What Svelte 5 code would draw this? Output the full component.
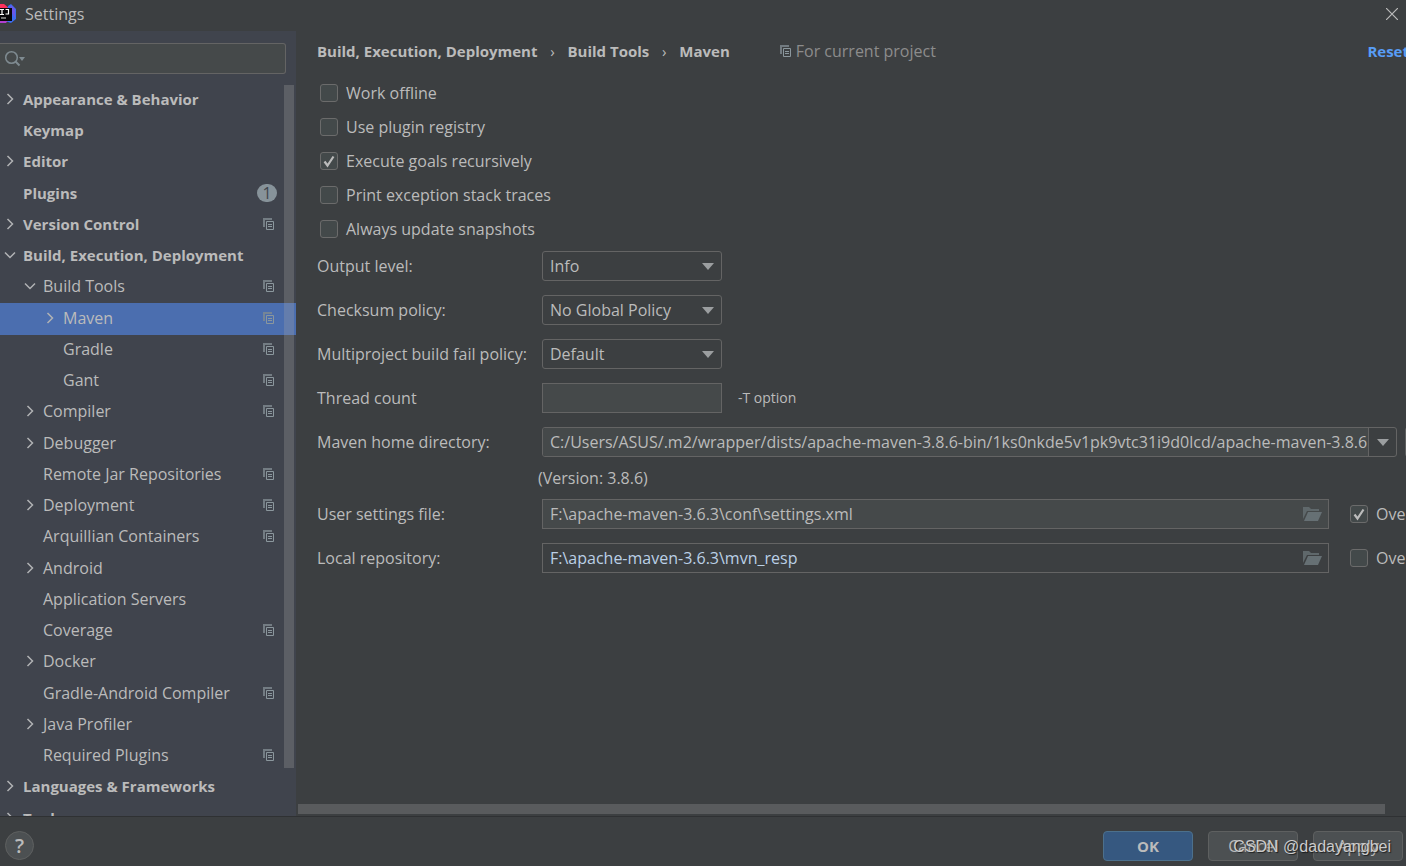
<script>
  let search = $state('');
  let selected = $state('Maven');

  const tree = [
    { label: 'Appearance & Behavior', depth: 0, arrow: 'right' },
    { label: 'Keymap', depth: 0 },
    { label: 'Editor', depth: 0, arrow: 'right' },
    { label: 'Plugins', depth: 0, badge: 1 },
    { label: 'Version Control', depth: 0, arrow: 'right', project: true },
    { label: 'Build, Execution, Deployment', depth: 0, arrow: 'down' },
    { label: 'Build Tools', depth: 1, arrow: 'down', project: true },
    { label: 'Maven', depth: 2, arrow: 'right', project: true },
    { label: 'Gradle', depth: 2, project: true },
    { label: 'Gant', depth: 2, project: true },
    { label: 'Compiler', depth: 1, arrow: 'right', project: true },
    { label: 'Debugger', depth: 1, arrow: 'right' },
    { label: 'Remote Jar Repositories', depth: 1, project: true },
    { label: 'Deployment', depth: 1, arrow: 'right', project: true },
    { label: 'Arquillian Containers', depth: 1, project: true },
    { label: 'Android', depth: 1, arrow: 'right' },
    { label: 'Application Servers', depth: 1 },
    { label: 'Coverage', depth: 1, project: true },
    { label: 'Docker', depth: 1, arrow: 'right' },
    { label: 'Gradle-Android Compiler', depth: 1, project: true },
    { label: 'Java Profiler', depth: 1, arrow: 'right' },
    { label: 'Required Plugins', depth: 1, project: true },
    { label: 'Languages & Frameworks', depth: 0, arrow: 'right' },
    { label: 'Tools', depth: 0, arrow: 'right' }
  ];

  let options = $state([
    { label: 'Work offline', checked: false },
    { label: 'Use plugin registry', checked: false },
    { label: 'Execute goals recursively', checked: true },
    { label: 'Print exception stack traces', checked: false },
    { label: 'Always update snapshots', checked: false }
  ]);

  const selects = [
    { id: 'output', label: 'Output level:', values: ['Info', 'Debug', 'Warn', 'Error', 'Fatal', 'Disabled'] },
    { id: 'checksum', label: 'Checksum policy:', values: ['No Global Policy', 'Fail', 'Warn'] },
    { id: 'fail', label: 'Multiproject build fail policy:', values: ['Default', 'Fail fast', 'Fail at end', 'Never fail'] }
  ];

  let threads = $state('');
  let mavenHome = $state(
    'C:/Users/ASUS/.m2/wrapper/dists/apache-maven-3.8.6-bin/1ks0nkde5v1pk9vtc31i9d0lcd/apache-maven-3.8.6'
  );

  let paths = $state([
    { id: 'settings', label: 'User settings file:', value: 'F:\\apache-maven-3.6.3\\conf\\settings.xml', override: true },
    { id: 'repo', label: 'Local repository:', value: 'F:\\apache-maven-3.6.3\\mvn_resp', override: false }
  ]);
</script>

{#snippet copyIcon()}
  <svg class="copy" width="11" height="12" viewBox="0 0 11 12" aria-hidden="true">
    <path d="M0 0h9v2H2v7H0z" fill="#7f8b91" opacity="0.8" />
    <path d="M3.500 3.500h7v8h-7z" fill="none" stroke="#8b979d" />
    <path d="M5 6.500h4M5 8.500h4" stroke="#8b979d" />
  </svg>
{/snippet}

{#snippet chevron(dir)}
  <svg width="14" height="14" viewBox="0 0 14 14" aria-hidden="true">
    <path
      d={dir === 'down' ? 'M2 4.5l5 5 5-5' : 'M4.5 2l5 5-5 5'}
      fill="none"
      stroke="#b0b2b4"
      stroke-width="1.5"
    />
  </svg>
{/snippet}

{#snippet triangle()}
  <svg class="triangle" width="12" height="7" viewBox="0 0 12 7" aria-hidden="true">
    <path d="M0 0h12L6 7z" fill="#9b9ea0" />
  </svg>
{/snippet}

<div class="window">
  <header class="titlebar">
    <svg class="logo" width="16" height="20" viewBox="0 0 16 20" aria-hidden="true">
      <path d="M0 0h4l6 5-5 5H0z" fill="#fe315d" />
      <path d="M8 2l3-2 5 5v10l-5 4-6-2z" fill="#3b6cf0" />
      <path d="M11 1l4 4v9l-5-8z" fill="#6b57e8" />
      <path d="M0 15h9l-3 4H0z" fill="#b23fd0" />
      <path d="M0 4h12v13H0z" fill="#08060a" />
      <path d="M0 5.5h4M2 5.5v5M0 10.5h4M5.500 5.500h3v4.500h-3" fill="none" stroke="#fff" stroke-width="1.200" />
      <path d="M1 14h5" stroke="#ddd" />
    </svg>
    <span class="title">Settings</span>
    <button class="close" aria-label="Close">
      <svg width="12" height="12" viewBox="0 0 12 12"><path d="M0 0l12 12M12 0L0 12" stroke="#bbb" stroke-width="1.200" /></svg>
    </button>
  </header>

  <div class="body">
    <aside class="sidebar">
      <div class="search">
        <svg width="22" height="18" viewBox="0 0 22 18" aria-hidden="true">
          <circle cx="7.500" cy="7.500" r="5.800" fill="none" stroke="#7f8b91" stroke-width="1.500" />
          <path d="M11.500 11.500l4 4" stroke="#7f8b91" stroke-width="2" />
          <path d="M15 7h6l-3 4z" fill="#7f8b91" />
        </svg>
        <input type="text" aria-label="Search settings" bind:value={search} />
      </div>

      <nav class="tree">
        <ul>
          {#each tree as item}
            <li>
              <button
                class="row depth-{item.depth}"
                class:selected={selected === item.label}
                onclick={() => (selected = item.label)}
              >
                <span class="arrow">
                  {#if item.arrow}{@render chevron(item.arrow)}{/if}
                </span>
                <span class="name">{item.label}</span>
                {#if item.badge}
                  <span class="badge">{item.badge}</span>
                {/if}
                {#if item.project}{@render copyIcon()}{/if}
              </button>
            </li>
          {/each}
        </ul>
        <div class="thumb"></div>
      </nav>
    </aside>

    <main>
      <div class="scroller">
        <div class="crumbs">
          <span>Build, Execution, Deployment</span>
          <span class="sep">›</span>
          <span>Build Tools</span>
          <span class="sep">›</span>
          <span>Maven</span>
          <span class="scope">{@render copyIcon()} For current project</span>
          <a class="reset" href="#reset">Reset</a>
        </div>

        <div class="checks">
          {#each options as option}
            <label class="check">
              <input type="checkbox" bind:checked={option.checked} />
              {option.label}
            </label>
          {/each}
        </div>

        <div class="form">
          {#each selects as item}
            <label for={item.id}>{item.label}</label>
            <div class="select">
              <select id={item.id}>
                {#each item.values as value}
                  <option>{value}</option>
                {/each}
              </select>
              {@render triangle()}
            </div>
          {/each}

          <label for="threads">Thread count</label>
          <div class="line">
            <input id="threads" class="field short" type="text" bind:value={threads} />
            <span class="hint">-T option</span>
          </div>

          <label for="home">Maven home directory:</label>
          <div class="line home">
            <div class="combo">
              <input id="home" type="text" bind:value={mavenHome} />
              <button aria-label="Show directories">{@render triangle()}</button>
            </div>
            <button class="browse" aria-label="Browse"></button>
          </div>

          <div class="version">(Version: 3.8.6)</div>

          {#each paths as path}
            <label for={path.id}>{path.label}</label>
            <div class="line path">
              <div class="file" class:inactive={!path.override}>
                <input id={path.id} type="text" bind:value={path.value} />
                <button aria-label="Choose file">
                  <svg width="20" height="14" viewBox="0 0 20 14">
                    <path d="M0 0h6l2 2h8v2H4L0 12z" fill="#5f686b" />
                    <path d="M5 5h14l-4 9H1z" fill="#667074" />
                  </svg>
                </button>
              </div>
              <label class="check override">
                <input type="checkbox" bind:checked={path.override} />
                Override
              </label>
            </div>
          {/each}
        </div>
      </div>
      <div class="hscroll"></div>
    </main>
  </div>

  <footer>
    <button class="help" aria-label="Help">?</button>
    <button class="btn primary">OK</button>
    <button class="btn">Cancel</button>
    <button class="btn">Apply</button>
    <span class="watermark">CSDN @dadayangbei</span>
  </footer>
</div>

<style>
  :global(body) {
    margin: 0;
    background: #3c3f41;
  }

  * {
    box-sizing: border-box;
  }

  .window {
    height: 100vh;
    display: flex;
    flex-direction: column;
    overflow: hidden;
    background: #3c3f41;
    color: #bbbbbb;
    font-family: 'Open Sans', 'Noto Sans', sans-serif;
    font-size: 16px;
    line-height: 20px;
  }

  button,
  input,
  select {
    font: inherit;
    color: inherit;
    margin: 0;
    padding: 0;
    border: none;
    background: none;
    outline: none;
  }

  svg {
    display: block;
    flex: none;
  }

  .titlebar {
    flex: none;
    height: 31px;
    display: flex;
    align-items: center;
    padding: 0 8px 3px 0;
  }

  .title {
    margin-left: 9px;
  }

  .close {
    margin-left: auto;
  }

  .body {
    flex: 1;
    min-height: 0;
    display: flex;
  }

  .sidebar {
    flex: none;
    width: 296px;
    display: flex;
    flex-direction: column;
    background: #40444d;
  }

  .search {
    height: 31px;
    margin: 12px 10px 11px 0;
    padding-left: 4px;
    display: flex;
    align-items: center;
    border: 1px solid #646464;
    border-left: none;
    border-radius: 0 3px 3px 0;
    background: #45494a;
  }

  .search input {
    flex: 1;
    min-width: 0;
  }

  .tree {
    position: relative;
    flex: 1;
    min-height: 0;
    overflow: hidden;
  }

  ul {
    list-style: none;
    margin: 0;
    padding: 0;
  }

  li {
    height: 31px;
  }

  li:nth-child(4n) {
    height: 32px;
  }

  .row {
    width: 100%;
    height: 100%;
    display: flex;
    align-items: center;
    padding-right: 22px;
    padding-bottom: 3px;
    text-align: left;
  }

  .depth-0 {
    font-size: 15px;
    font-weight: 700;
  }

  .depth-1 {
    padding-left: 20px;
  }

  .depth-2 {
    padding-left: 40px;
  }

  .row.selected {
    background: #4b6eaf;
  }

  .arrow {
    width: 23px;
    padding-left: 3px;
  }

  .name {
    flex: 1;
    white-space: nowrap;
  }

  .badge {
    width: 20px;
    height: 18px;
    margin-right: -3px;
    border-radius: 9px;
    background: #87939a;
    color: #40444d;
    font-size: 16px;
    font-weight: 400;
    line-height: 18px;
    text-align: center;
  }

  .thumb {
    position: absolute;
    top: 0;
    right: 2px;
    bottom: 48px;
    width: 10px;
    background: rgba(166, 166, 166, 0.28);
  }

  main {
    flex: 1;
    min-width: 0;
    display: flex;
    flex-direction: column;
  }

  .scroller {
    flex: 1;
    min-height: 0;
    overflow: hidden;
    padding: 10px 0 0 21px;
  }

  .crumbs {
    width: calc(100% + 3px);
    display: flex;
    align-items: center;
    font-size: 15px;
    font-weight: 700;
    white-space: nowrap;
  }

  .sep {
    width: 30px;
    font-weight: 400;
    text-align: center;
  }

  .scope {
    display: flex;
    align-items: center;
    gap: 5px;
    margin-left: 50px;
    color: #8c8c8c;
    font-size: 16px;
    font-weight: 400;
  }

  .reset {
    margin-left: auto;
    color: #589df6;
    text-decoration: none;
  }

  .checks {
    display: flex;
    flex-direction: column;
    align-items: flex-start;
    padding: 15px 0 5px 3px;
  }

  .check {
    height: 34px;
    display: flex;
    align-items: center;
    gap: 8px;
    white-space: nowrap;
  }

  .check input {
    appearance: none;
    flex: none;
    width: 18px;
    height: 18px;
    border: 1px solid #6b6b6b;
    border-radius: 3px;
    background: #43494a;
  }

  .check input:checked {
    background: #43494a
      url("data:image/svg+xml,%3Csvg xmlns='http://www.w3.org/2000/svg' viewBox='0 0 16 16'%3E%3Cpath d='M3.500 8.500l3 4L12.500 3.500' fill='none' stroke='%23bbb' stroke-width='2.200'/%3E%3C/svg%3E")
      center / 16px no-repeat;
  }

  /* the form runs past the right edge, behind the horizontal scroll bar */
  .form {
    width: calc(100% + 32px);
    display: grid;
    grid-template-columns: 225px minmax(0, 1fr);
    row-gap: 14px;
    align-items: center;
    white-space: nowrap;
  }

  .line {
    display: flex;
    align-items: center;
  }

  .select {
    position: relative;
    width: 180px;
  }

  .select select {
    display: block;
    appearance: none;
    width: 100%;
    height: 30px;
    padding: 0 28px 0 7px;
    border: 1px solid #646464;
    border-radius: 3px;
    background: #3c3f41;
  }

  .select .triangle {
    position: absolute;
    top: 12px;
    right: 8px;
    pointer-events: none;
  }

  .field,
  .file {
    height: 30px;
    border: 1px solid #646464;
    background: #45494a;
  }

  .short {
    width: 180px;
    padding: 0 7px;
  }

  .hint {
    margin-left: 16px;
    font-size: 14px;
  }

  .home {
    gap: 8px;
  }

  .combo {
    flex: 1;
    min-width: 0;
    height: 30px;
    display: flex;
    border: 1px solid #646464;
    border-radius: 3px;
    overflow: hidden;
  }

  .combo input {
    flex: 1;
    min-width: 0;
    padding-left: 7px;
    background: #45494a;
  }

  .combo button {
    width: 28px;
    display: flex;
    align-items: center;
    justify-content: center;
    border-left: 1px solid #646464;
  }

  .browse {
    width: 33px;
    height: 30px;
    border: 1px solid #5e6060;
    border-radius: 3px;
    background: #4c5052;
  }

  .version {
    grid-column: 2;
    margin-left: -4px;
    line-height: 14px;
  }

  .path {
    gap: 21px;
  }

  .file {
    flex: 1;
    min-width: 0;
    display: flex;
    align-items: center;
    padding: 0 5px 0 7px;
  }

  .file.inactive {
    background: #3c3f41;
    color: #bbd0e6;
  }

  .file input {
    flex: 1;
    min-width: 0;
  }

  .override {
    width: 88px;
    height: 30px;
  }

  .hscroll {
    flex: none;
    height: 10px;
    margin: 0 21px 2px 2px;
    background: #595b5d;
  }

  footer {
    position: relative;
    flex: none;
    height: 50px;
    display: flex;
    align-items: center;
    gap: 15px;
    padding: 8px 3px 0 5px;
    border-top: 1px solid #2f3133;
  }

  .help {
    width: 29px;
    height: 29px;
    margin-right: auto;
    border: 1px solid #5e6060;
    border-radius: 50%;
    background: #4c5052;
    font-size: 20px;
    font-weight: 600;
  }

  .btn {
    width: 90px;
    height: 30px;
    border: 1px solid #5e6060;
    border-radius: 4px;
    background: #4c5052;
  }

  .btn.primary {
    border-color: #4c708c;
    background: #365880;
    font-size: 15px;
    font-weight: 700;
  }

  .watermark {
    position: absolute;
    right: 15px;
    bottom: 9px;
    color: #cccccc;
    font-family: 'Liberation Sans', sans-serif;
    font-size: 16px;
    text-shadow: 1px 1px 1px rgba(0, 0, 0, 0.6);
    pointer-events: none;
  }
</style>
